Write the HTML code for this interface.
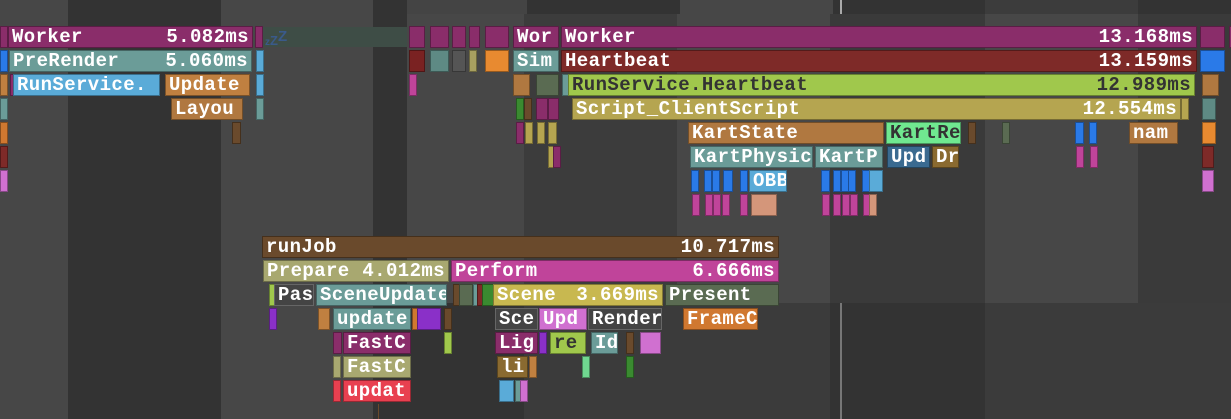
<!DOCTYPE html>
<html><head><meta charset="utf-8"><style>
*{margin:0;padding:0}
body{width:1231px;height:419px;overflow:hidden;background:#333;position:relative;font-family:"Liberation Mono",monospace;}
.g{position:absolute}
.b{position:absolute;height:22px;box-sizing:border-box;border:1px solid rgba(0,0,0,.35);color:#fff;font-weight:bold;font-size:19px;letter-spacing:0.4px;line-height:20px;white-space:nowrap;overflow:hidden;padding:0 3px;display:flex;justify-content:space-between}
.d{color:#333}
.M{background:#8a2d6a}.T{background:#6b9c98}.L{background:#5aabd8}.O{background:#c08040}.BR{background:#6a4a2c}
.R{background:#7e2a28}.Y{background:#a0c84c}.K{background:#b5a550}.KH{background:#a8a870}.P{background:#c0449a}
.G{background:#444;border-color:#666}.BL{background:#2a7ae8}.S{background:#d4967a}.PK{background:#d070d0}
.DG{background:#5a6b52}.GR{background:#3a8a30}.PU{background:#8a30c8}.OR{background:#d07830}.RD{background:#e84050}
</style></head><body>
<div class="g" style="left:0;top:0;width:68px;height:419px;background:#474747"></div>
<div class="g" style="left:221px;top:0;width:152px;height:419px;background:#474747"></div>
<div class="g" style="left:407px;top:0;width:120px;height:14px;background:#444"></div>
<div class="g" style="left:680px;top:0;width:153px;height:14px;background:#474747"></div>
<div class="g" style="left:985px;top:0;width:153px;height:14px;background:#3c3c3c"></div>
<div class="g" style="left:407px;top:14px;width:117px;height:289px;background:#474747"></div>
<div class="g" style="left:524px;top:14px;width:153px;height:289px;background:#3c3c3c"></div>
<div class="g" style="left:677px;top:14px;width:153px;height:289px;background:#474747"></div>
<div class="g" style="left:830px;top:14px;width:155px;height:289px;background:#3a3a3a"></div>
<div class="g" style="left:985px;top:14px;width:153px;height:289px;background:#474747"></div>
<div class="g" style="left:1138px;top:14px;width:93px;height:289px;background:#3a3a3a"></div>
<div class="g" style="left:524px;top:303px;width:306px;height:116px;background:#3b3b3b"></div>
<div class="g" style="left:985px;top:303px;width:246px;height:116px;background:#3b3b3b"></div>
<div class="g" style="left:840px;top:0;width:2px;height:14px;background:#aaa"></div>
<div class="g" style="left:840px;top:303px;width:2px;height:116px;background:#777"></div>
<div class="g" style="left:260px;top:27px;width:147px;height:20px;background:#3e4d46"></div>
<div class="g" style="left:265px;top:28px;color:#3a5a8a;font:bold 10px sans-serif">z<span style="font-size:13px">Z</span><span style="font-size:15px;vertical-align:4px">Z</span></div>

<div class="b M" style="left:0;top:26px;width:5px"></div>
<div class="b BL" style="left:0;top:50px;width:5px"></div>
<div class="b O" style="left:0;top:74px;width:3px"></div>
<div class="b T" style="left:0;top:98px;width:3px"></div>
<div class="b OR" style="left:0;top:122px;width:2px"></div>
<div class="b R" style="left:0;top:146px;width:2px"></div>
<div class="b PK" style="left:0;top:170px;width:2px"></div>

<div class="b M" style="left:8px;top:26px;width:245px"><span>Worker</span><span>5.082ms</span></div>
<div class="b M" style="left:255px;top:26px;width:4px"></div>
<div class="b T" style="left:9px;top:50px;width:243px"><span>PreRender</span><span>5.060ms</span></div>
<div class="b L" style="left:256px;top:50px;width:3px"></div>
<div class="b M" style="left:10px;top:74px;width:3px"></div>
<div class="b L" style="left:13px;top:74px;width:147px"><span>RunService.</span></div>
<div class="b O" style="left:165px;top:74px;width:85px"><span>Update</span></div>
<div class="b L" style="left:256px;top:74px;width:3px"></div>
<div class="b O" style="left:171px;top:98px;width:72px;background:#b07840"><span>Layou</span></div>
<div class="b T" style="left:256px;top:98px;width:3px"></div>
<div class="b BR" style="left:232px;top:122px;width:9px"></div>

<div class="b M" style="left:409px;top:26px;width:16px"></div>
<div class="b M" style="left:430px;top:26px;width:19px"></div>
<div class="b M" style="left:452px;top:26px;width:14px"></div>
<div class="b M" style="left:469px;top:26px;width:11px"></div>
<div class="b M" style="left:485px;top:26px;width:24px"></div>
<div class="b M" style="left:513px;top:26px;width:46px"><span>Wor</span></div>
<div class="b M" style="left:561px;top:26px;width:636px"><span>Worker</span><span>13.168ms</span></div>
<div class="b R" style="left:409px;top:50px;width:16px;background:#7a2222"></div>
<div class="b T" style="left:430px;top:50px;width:19px;background:#5e8a84"></div>
<div class="b" style="left:452px;top:50px;width:14px;background:#555"></div>
<div class="b" style="left:469px;top:50px;width:8px;background:#a8a060"></div>
<div class="b" style="left:485px;top:50px;width:24px;background:#e88a30"></div>
<div class="b T" style="left:513px;top:50px;width:46px"><span>Sim</span></div>
<div class="b R" style="left:561px;top:50px;width:636px"><span>Heartbeat</span><span>13.159ms</span></div>
<div class="b P" style="left:409px;top:74px;width:5px"></div>
<div class="b O" style="left:513px;top:74px;width:17px;background:#b07840"></div>
<div class="b DG" style="left:536px;top:74px;width:23px"></div>
<div class="b T" style="left:562px;top:74px;width:5px"></div>
<div class="b Y d" style="left:568px;top:74px;width:627px"><span>RunService.Heartbeat</span><span>12.989ms</span></div>
<div class="b GR" style="left:516px;top:98px;width:7px"></div>
<div class="b BR" style="left:524px;top:98px;width:4px"></div>
<div class="b M" style="left:536px;top:98px;width:12px"></div>
<div class="b M" style="left:548px;top:98px;width:11px"></div>
<div class="b K" style="left:572px;top:98px;width:609px"><span>Script_ClientScript</span><span>12.554ms</span></div>
<div class="b K" style="left:1181px;top:98px;width:3px"></div>
<div class="b M" style="left:516px;top:122px;width:8px"></div>
<div class="b K" style="left:525px;top:122px;width:3px"></div>
<div class="b K" style="left:537px;top:122px;width:3px"></div>
<div class="b K" style="left:548px;top:122px;width:9px"></div>
<div class="b K" style="left:548px;top:146px;width:4px"></div>
<div class="b M" style="left:553px;top:146px;width:4px"></div>
<div class="b O" style="left:688px;top:122px;width:196px;background:#b07840"><span>KartState</span></div>
<div class="b d" style="left:886px;top:122px;width:75px;background:#70e890"><span>KartRe</span></div>
<div class="b BR" style="left:968px;top:122px;width:4px"></div>
<div class="b DG" style="left:1002px;top:122px;width:5px"></div>
<div class="b BL" style="left:1075px;top:122px;width:9px"></div>
<div class="b BL" style="left:1089px;top:122px;width:5px"></div>
<div class="b O" style="left:1129px;top:122px;width:49px;background:#b07840"><span>nam</span></div>
<div class="b T" style="left:690px;top:146px;width:123px"><span>KartPhysic</span></div>
<div class="b T" style="left:815px;top:146px;width:68px"><span>KartP</span></div>
<div class="b" style="left:887px;top:146px;width:43px;background:#3a6a90"><span>Upd</span></div>
<div class="b" style="left:932px;top:146px;width:27px;background:#8a6a30"><span>Dr</span></div>
<div class="b P" style="left:1076px;top:146px;width:6px"></div>
<div class="b P" style="left:1090px;top:146px;width:3px"></div>
<div class="b BL" style="left:691px;top:170px;width:8px"></div>
<div class="b BL" style="left:704px;top:170px;width:6px"></div>
<div class="b BL" style="left:712px;top:170px;width:8px"></div>
<div class="b BL" style="left:723px;top:170px;width:10px"></div>
<div class="b BL" style="left:740px;top:170px;width:6px"></div>
<div class="b L" style="left:749px;top:170px;width:38px"><span>OBB</span></div>
<div class="b BL" style="left:821px;top:170px;width:9px"></div>
<div class="b BL" style="left:833px;top:170px;width:5px"></div>
<div class="b BL" style="left:841px;top:170px;width:5px"></div>
<div class="b BL" style="left:848px;top:170px;width:5px"></div>
<div class="b BL" style="left:862px;top:170px;width:5px"></div>
<div class="b L" style="left:869px;top:170px;width:14px"></div>
<div class="b P" style="left:692px;top:194px;width:5px"></div>
<div class="b P" style="left:705px;top:194px;width:4px"></div>
<div class="b P" style="left:713px;top:194px;width:4px"></div>
<div class="b P" style="left:722px;top:194px;width:8px"></div>
<div class="b P" style="left:740px;top:194px;width:5px"></div>
<div class="b S" style="left:751px;top:194px;width:26px"></div>
<div class="b P" style="left:822px;top:194px;width:4px"></div>
<div class="b P" style="left:833px;top:194px;width:3px"></div>
<div class="b P" style="left:842px;top:194px;width:3px"></div>
<div class="b P" style="left:850px;top:194px;width:3px"></div>
<div class="b P" style="left:863px;top:194px;width:3px"></div>
<div class="b S" style="left:869px;top:194px;width:7px"></div>
<div class="b M" style="left:1200px;top:26px;width:25px"></div>
<div class="b M" style="left:1229px;top:26px;width:4px"></div>
<div class="b BL" style="left:1200px;top:50px;width:25px"></div>
<div class="b O" style="left:1202px;top:74px;width:17px;background:#b07840"></div>
<div class="b T" style="left:1202px;top:98px;width:14px;background:#5e8a84"></div>
<div class="b" style="left:1202px;top:122px;width:14px;background:#e88a30"></div>
<div class="b R" style="left:1202px;top:146px;width:12px"></div>
<div class="b PK" style="left:1202px;top:170px;width:12px"></div>

<div class="b BR" style="left:262px;top:236px;width:517px"><span>runJob</span><span>10.717ms</span></div>
<div class="b KH" style="left:263px;top:260px;width:186px"><span>Prepare</span><span>4.012ms</span></div>
<div class="b P" style="left:451px;top:260px;width:328px"><span>Perform</span><span>6.666ms</span></div>
<div class="b Y" style="left:269px;top:284px;width:4px"></div>
<div class="b G" style="left:274px;top:284px;width:40px"><span>Pas</span></div>
<div class="b T" style="left:316px;top:284px;width:131px"><span>SceneUpdate</span></div>
<div class="b BR" style="left:453px;top:284px;width:2px"></div>
<div class="b DG" style="left:459px;top:284px;width:14px"></div>
<div class="b T" style="left:473px;top:284px;width:3px"></div>
<div class="b R" style="left:477px;top:284px;width:2px"></div>
<div class="b GR" style="left:482px;top:284px;width:16px"></div>
<div class="b" style="left:493px;top:284px;width:170px;background:#c8b850"><span>Scene</span><span>3.669ms</span></div>
<div class="b DG" style="left:665px;top:284px;width:114px"><span>Present</span></div>
<div class="b PU" style="left:269px;top:308px;width:3px"></div>
<div class="b O" style="left:318px;top:308px;width:12px"></div>
<div class="b T" style="left:333px;top:308px;width:78px"><span>update</span></div>
<div class="b OR" style="left:412px;top:308px;width:4px"></div>
<div class="b PU" style="left:417px;top:308px;width:24px"></div>
<div class="b BR" style="left:444px;top:308px;width:3px"></div>
<div class="b G" style="left:495px;top:308px;width:43px"><span>Sce</span></div>
<div class="b PK" style="left:539px;top:308px;width:48px"><span>Upd</span></div>
<div class="b G" style="left:588px;top:308px;width:74px"><span>Render</span></div>
<div class="b OR" style="left:683px;top:308px;width:75px"><span>FrameC</span></div>
<div class="b M" style="left:333px;top:332px;width:9px"></div>
<div class="b M" style="left:343px;top:332px;width:68px"><span>FastC</span></div>
<div class="b Y" style="left:444px;top:332px;width:3px"></div>
<div class="b M" style="left:495px;top:332px;width:43px"><span>Lig</span></div>
<div class="b PU" style="left:539px;top:332px;width:8px"></div>
<div class="b Y d" style="left:550px;top:332px;width:36px"><span>re</span></div>
<div class="b T" style="left:591px;top:332px;width:27px"><span>Id</span></div>
<div class="b BR" style="left:626px;top:332px;width:4px"></div>
<div class="b PK" style="left:640px;top:332px;width:21px"></div>
<div class="b KH" style="left:333px;top:356px;width:7px"></div>
<div class="b KH" style="left:343px;top:356px;width:68px"><span>FastC</span></div>
<div class="b" style="left:497px;top:356px;width:31px;background:#8a6a30"><span>li</span></div>
<div class="b O" style="left:529px;top:356px;width:7px"></div>
<div class="b" style="left:582px;top:356px;width:4px;background:#70d890"></div>
<div class="b GR" style="left:626px;top:356px;width:3px"></div>
<div class="b RD" style="left:333px;top:380px;width:7px"></div>
<div class="b RD" style="left:343px;top:380px;width:68px"><span>updat</span></div>
<div class="b L" style="left:499px;top:380px;width:15px"></div>
<div class="b T" style="left:515px;top:380px;width:4px"></div>
<div class="b PK" style="left:520px;top:380px;width:7px"></div>
<div class="g" style="left:378px;top:404px;width:1px;height:15px;background:#6a4a2c"></div>
</body></html>
